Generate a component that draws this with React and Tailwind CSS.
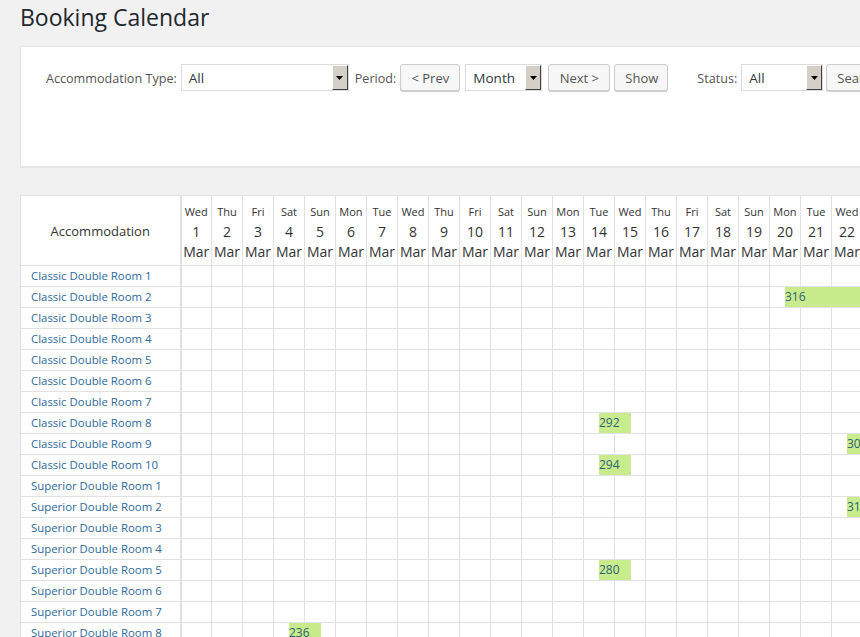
import React from 'react';

const dayNames = ['Wed', 'Thu', 'Fri', 'Sat', 'Sun', 'Mon', 'Tue'];
const days = Array.from({ length: 31 }, (_, i) => ({ num: i + 1, name: dayNames[i % 7] }));

const rooms = [
  ...Array.from({ length: 10 }, (_, i) => `Classic Double Room ${i + 1}`),
  ...Array.from({ length: 10 }, (_, i) => `Superior Double Room ${i + 1}`),
];

// row index -> booking (start day, nights)
const bookings = {
  1: { id: 316, start: 20, nights: 6 },
  7: { id: 292, start: 14, nights: 1 },
  8: { id: 305, start: 22, nights: 2 },
  9: { id: 294, start: 14, nights: 1 },
  11: { id: 312, start: 22, nights: 2 },
  14: { id: 280, start: 14, nights: 1 },
  17: { id: 236, start: 4, nights: 1 },
};

const font = { fontFamily: '"Open Sans", "Noto Sans", sans-serif' };

function Select({ value, width }) {
  return (
    <div className={`flex h-[27px] items-stretch border border-[#dcdcdc] bg-white ${width}`}>
      <span className="flex flex-1 items-center pt-[2px] pl-[7px] text-[13.5px] text-[#32373c]">{value}</span>
      <span className="flex w-[16px] items-center justify-center border-t border-l border-t-white border-l-white border-r border-b border-r-[#404040] border-b-[#404040] bg-[#d4d0c8]">
        <svg width="7" height="4" viewBox="0 0 7 4">
          <path d="M0 0h7L3.5 4z" fill="#000" />
        </svg>
      </span>
    </div>
  );
}

function Button({ children, className = '' }) {
  return (
    <button
      className={`h-[27px] rounded-[3px] border border-[#cccccc] bg-[#f7f7f7] px-[10px] pt-[2px] text-[13px] text-[#555] shadow-[0_1px_0_#cccccc] ${className}`}
    >
      {children}
    </button>
  );
}

export default function App() {
  return (
    <div className="h-[637px] w-[860px] overflow-hidden bg-[#f1f1f1] pl-[20px]" style={font}>
      <h1 className="pt-[3px] text-[23px] leading-[29px] text-[#23282d]">Booking Calendar</h1>

      <div className="mt-[14px] h-[121px] w-[900px] border border-[#e5e5e5] bg-white pt-[17px] pl-[25px] shadow-[0_1px_1px_rgba(0,0,0,0.04)]">
        <div className="flex h-[27px] items-center text-[12.6px] text-[#555]">
          <span className="pt-[4px]">Accommodation Type:</span>
          <div className="ml-[4px]">
            <Select value="All" width="w-[168px]" />
          </div>
          <span className="ml-[6px] pt-[4px]">Period:</span>
          <Button className="ml-[4px] w-[60px]">&lt; Prev</Button>
          <div className="ml-[5px]">
            <Select value="Month" width="w-[77px]" />
          </div>
          <Button className="ml-[6px] w-[62px]">Next &gt;</Button>
          <Button className="ml-[4px] w-[54px]">Show</Button>
          <span className="ml-[29px] pt-[4px]">Status:</span>
          <div className="ml-[4px]">
            <Select value="All" width="w-[82px]" />
          </div>
          <Button className="ml-[3px] w-[70px] text-left">Search</Button>
        </div>
      </div>

      <div className="mt-[28px] w-[1200px]">
        <table className="table-fixed border-collapse border border-[#e1e1e1] bg-white" style={{ width: 160 + 31 * 31 }}>
          <colgroup>
            <col style={{ width: 160 }} />
            {days.map((d) => (
              <col key={d.num} style={{ width: 31 }} />
            ))}
          </colgroup>
          <thead>
            <tr className="h-[70px]">
              <th className="border-r-2 border-b border-[#e1e1e1] pt-[3px] text-center text-[13px] font-normal text-[#333]">
                Accommodation
              </th>
              {days.map((d) => (
                <th key={d.num} className="border-r border-b border-[#e1e1e1] p-0 pt-[2px] text-center font-normal text-[#333]">
                  <div className="text-[11px] leading-[20px]">{d.name}</div>
                  <div className="text-[14px] leading-[20px]">{d.num}</div>
                  <div className="text-[14px] leading-[20px]">Mar</div>
                </th>
              ))}
            </tr>
          </thead>
          <tbody>
            {rooms.map((room, r) => {
              const b = bookings[r];
              return (
                <tr key={room} className="h-[21px]">
                  <td className="border-r-2 border-b border-[#e1e1e1] pl-[10px] text-[11.4px] leading-[20px] whitespace-nowrap text-[#2e6a9c]">
                    {room}
                  </td>
                  {days.map((d) => (
                    <td key={d.num} className="relative border-r border-b border-[#e1e1e1] p-0">
                      {b && b.start === d.num && (
                        <div
                          className="absolute top-0 left-[15px] z-10 h-[20px] bg-[#c8ec8c] text-[12px] leading-[20px] text-[#2f5f7a]"
                          style={{ width: b.nights * 31 + 1 }}
                        >
                          {b.id}
                        </div>
                      )}
                    </td>
                  ))}
                </tr>
              );
            })}
          </tbody>
        </table>
      </div>
    </div>
  );
}
